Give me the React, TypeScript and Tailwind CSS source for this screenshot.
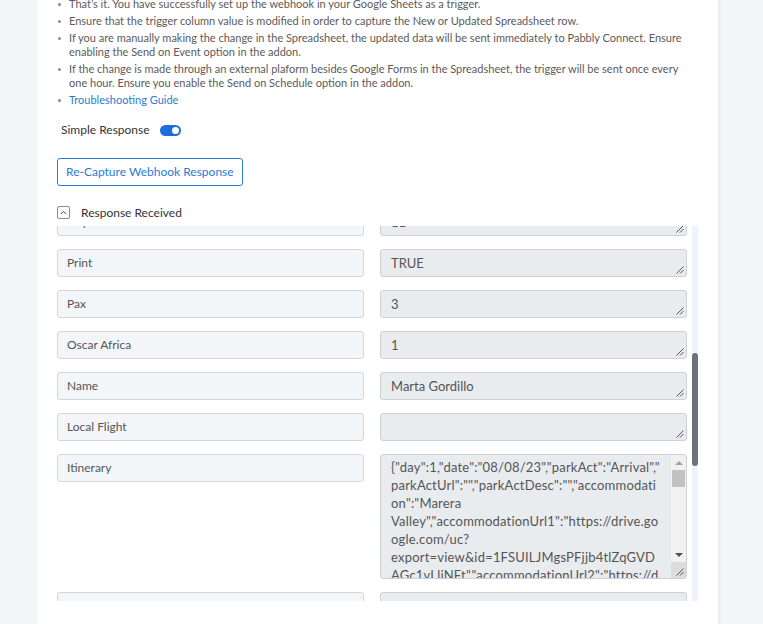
import React, { useLayoutEffect, useRef } from 'react';
import { ChevronUp } from 'lucide-react';

type Field = {
  label: string;
  value: string;
  tall?: boolean;
};

const itinerary =
  '{"day":1,"date":"08/08/23","parkAct":"Arrival","parkActUrl":"","parkActDesc":"","accommodation":"Marera Valley","accommodationUrl1":"https://drive.google.com/uc?export=view&id=1FSUILJMgsPFjjb4tlZqGVDAGc1vLliNFt","accommodationUrl2":"https://drive.google.com/uc?export=view&id=1Qm7pXvAq0sK3bTn9RZyWcH2dLfUe8oJi","meals":"Dinner","drinks":"Not included"}';

const fields: Field[] = [
  { label: 'Booking ID', value: '4821' },
  { label: 'Created', value: '07/21/23' },
  { label: 'Agent', value: 'Safari Desk' },
  { label: 'Client', value: 'Gordillo Family' },
  { label: 'Email', value: 'marta.gordillo@mail.com' },
  { label: 'Phone', value: '+34 612 448 903' },
  { label: 'Country', value: 'Spain' },
  { label: 'Arrival', value: '08/08/23' },
  { label: 'Departure', value: '08/18/23' },
  { label: 'Nights', value: '10' },
  { label: 'Days', value: '11' },
  { label: 'Print', value: 'TRUE' },
  { label: 'Pax', value: '3' },
  { label: 'Oscar Africa', value: '1' },
  { label: 'Name', value: 'Marta Gordillo' },
  { label: 'Local Flight', value: '' },
  { label: 'Itinerary', value: itinerary, tall: true },
  { label: 'Total Amount', value: '750.00' },
  { label: 'Deposit', value: '225.00' },
  { label: 'Balance', value: '525.00' },
  { label: 'Currency', value: 'USD' },
];

const notes = [
  'That\u2019s it. You have successfully set up the webhook in your Google Sheets as a trigger.',
  'Ensure that the trigger column value is modified in order to capture the New or Updated Spreadsheet row.',
  'If you are manually making the change in the Spreadsheet, the updated data will be sent immediately to Pabbly Connect. Ensure enabling the Send on Event option in the addon.',
  'If the change is made through an external plaform besides Google Forms in the Spreadsheet, the trigger will be sent once every one hour. Ensure you enable the Send on Schedule option in the addon.',
];

const font = { fontFamily: 'Lato, "Open Sans", sans-serif' };

// little diagonal grip drawn in a textarea's bottom-right corner
const Grip: React.FC = () => (
  <svg width="8" height="8" viewBox="0 0 8 8" className="text-[#555]">
    <path d="M7.5 0.5 L0.5 7.5 M7.5 4 L4 7.5" stroke="currentColor" strokeWidth="1" fill="none" />
  </svg>
);

const Bullet: React.FC = () => (
  <span className="w-[12px] shrink-0 pl-[1px] pt-[6px]">
    <span className="block h-[3px] w-[3px] rounded-full bg-[#8a8a8a]" />
  </span>
);

const TallValue: React.FC<{ value: string }> = ({ value }) => (
  <div className="flex h-[125px] overflow-hidden rounded-[3px] border border-[#cdd1d5] bg-[#e9ecef]">
    <div className="min-w-0 flex-1 overflow-hidden break-words py-[3px] pl-[10px] pr-[10px] text-[13px] leading-[18px] tracking-[0.2px] text-[#555]">
      {value}
    </div>
    <div className="flex w-[15px] shrink-0 flex-col bg-[#f1f1f1]">
      <div className="flex h-[15px] items-center justify-center">
        <span className="h-0 w-0 border-x-[4px] border-b-[4px] border-x-transparent border-b-[#a3a3a3]" />
      </div>
      <div className="mx-[1px] h-[17px] bg-[#c1c1c1]" />
      <div className="flex-1" />
      <div className="flex h-[15px] items-center justify-center">
        <span className="h-0 w-0 border-x-[4px] border-t-[4px] border-x-transparent border-t-[#505050]" />
      </div>
      <div className="flex h-[16px] items-end justify-end bg-[#dcdcdc] pb-[2px] pr-[2px]">
        <Grip />
      </div>
    </div>
  </div>
);

const FieldRow: React.FC<Field> = ({ label, value, tall }) => (
  <>
    <div className="h-[28px] rounded-[3px] border border-[#d3d7db] bg-[#f3f6f9] px-[9px] text-[12px] leading-[26px] text-[#555]">
      {label}
    </div>
    {tall ? (
      <TallValue value={value} />
    ) : (
      <div className="flex h-[28px] rounded-[3px] border border-[#cdd1d5] bg-[#e9ecef]">
        <div className="flex-1 truncate px-[10px] text-[13px] leading-[26px] text-[#555]">{value}</div>
        <div className="flex items-end pb-[2px] pr-[2px]">
          <Grip />
        </div>
      </div>
    )}
  </>
);

const App: React.FC = () => {
  const listRef = useRef<HTMLDivElement>(null);

  useLayoutEffect(() => {
    if (listRef.current) listRef.current.scrollTop = 428;
  }, []);

  return (
    <div className="h-[624px] w-[763px] overflow-hidden bg-[#f3f6f9]" style={font}>
      <div className="ml-[37px] h-[624px] w-[681px] overflow-hidden bg-white pl-[20px] pr-[20px] shadow-[2px_0_3px_rgba(0,0,0,0.05)]">
        <ul className="-mt-[3px] pr-[6px] text-[11px] leading-[14px] text-[#5b5b5b]">
          {notes.map((note, i) => (
            <li key={i} className="mb-[3px] flex">
              <Bullet />
              <span>{note}</span>
            </li>
          ))}
          <li className="flex">
            <Bullet />
            <a className="text-[#2b7bd3]">Troubleshooting Guide</a>
          </li>
        </ul>

        <div className="mt-[16px] flex h-[14px] items-center pl-[4px]">
          <span className="text-[12px] leading-[14px] text-[#333]">Simple Response</span>
          <span className="ml-[10px] flex h-[11px] w-[21px] items-center justify-end rounded-full bg-[#1b6fdc] pr-[2px]">
            <span className="h-[7px] w-[7px] rounded-full bg-white" />
          </span>
        </div>

        <button className="mt-[21px] block h-[28px] rounded-[3px] border border-[#2b7bd3] px-[8px] text-[12px] text-[#2b7bd3]">
          Re-Capture Webhook Response
        </button>

        <div className="mt-[20px] flex h-[13px] items-center">
          <span className="flex h-[13px] w-[13px] items-center justify-center rounded-[2px] border border-[#8c8c8c] text-[#333]">
            <ChevronUp size={9} strokeWidth={2.5} />
          </span>
          <span className="ml-[11px] text-[12px] leading-[13px] text-[#333]">Response Received</span>
        </div>

        <div className="mt-[7px] flex h-[375px] gap-[5px]">
          <div ref={listRef} className="min-w-0 flex-1 overflow-hidden">
            <div className="grid grid-cols-2 items-start gap-x-[16px] gap-y-[13px] pb-[20px]">
              {fields.map((f, i) => (
                <FieldRow key={i} {...f} />
              ))}
            </div>
          </div>
          {/* scroll track of the response list */}
          <div className="w-[6px] shrink-0 bg-[#edf4fc]">
            <div className="mt-[127px] h-[113px] rounded-full bg-[#6c737b]" />
          </div>
        </div>
      </div>
    </div>
  );
};

export default App;
